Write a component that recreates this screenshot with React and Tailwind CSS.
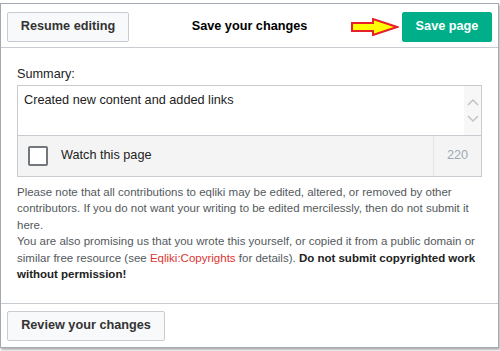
export default function App() {
  return (
    <div className="w-[500px] h-[351px] bg-white pt-[3px] font-['Liberation_Sans',Arial,sans-serif] text-[12.7px]">
      <div className="w-[499px] h-[345px] border border-[#a2a9b1] shadow-[1px_2px_2px_0_rgba(0,0,0,0.3)] flex flex-col bg-white">
        {/* Header */}
        <div className="h-[44px] border-b border-[#c8ccd1] grid grid-cols-[1fr_auto_1fr] items-start pt-[8px] px-[6px]">
          <div>
            <button className="w-[122px] h-[30px] border border-[#c8ccd1] bg-[#f8f9fa] rounded-[2px] font-bold text-[#333]">
              Resume editing
            </button>
          </div>
          <h2 className="font-bold text-black h-[30px] flex items-center">Save your changes</h2>
          <div className="flex justify-end items-center gap-[3px]">
            <svg width="48" height="18" viewBox="0 0 48 18">
              <polygon
                points="1,5 22,5 22,1 46,9 22,17 22,13 1,13"
                fill="#ffff00"
                stroke="#e8202a"
                strokeWidth="2"
              />
            </svg>
            <button className="w-[90px] h-[30px] border border-[#00af89] bg-[#00af89] rounded-[2px] font-bold text-white">
              Save page
            </button>
          </div>
        </div>

        {/* Body */}
        <div className="h-[256px] px-[16px] pt-[18px] border-b border-[#c8ccd1]">
          <label className="block leading-[16px] text-[#222]">Summary:</label>
          <div className="mt-[3px] border border-[#c8ccd1]">
            <div className="h-[49px] flex">
              <div className="flex-1 px-[6px] pt-[5px] text-[#222]">Created new content and added links</div>
              <div className="w-[17px] bg-[#f7f7f7] flex flex-col items-center justify-center gap-[9px]">
                <svg width="12" height="8" viewBox="0 0 12 8">
                  <path d="M1 7 L6 2 L11 7" fill="none" stroke="#c0c4c8" strokeWidth="1.5" />
                </svg>
                <svg width="12" height="8" viewBox="0 0 12 8">
                  <path d="M1 1 L6 6 L11 1" fill="none" stroke="#c0c4c8" strokeWidth="1.5" />
                </svg>
              </div>
            </div>
            <div className="h-[41px] border-t border-[#c8ccd1] bg-[#f4f4f4] flex items-center">
              <div className="flex-1 flex items-center pl-[10px]">
                <span className="w-[20px] h-[20px] border-2 border-[#72777d] rounded-[2px] bg-white"></span>
                <span className="ml-[13px] text-[#222]">Watch this page</span>
              </div>
              <div className="w-[48px] h-full border-l border-[#e4e4e4] flex items-center justify-center text-[#a2a9b1]">
                220
              </div>
            </div>
          </div>
          <div className="mt-[7px] leading-[16.4px] text-[11.5px] text-[#54595d] whitespace-nowrap">
            <p>
              Please note that all contributions to eqliki may be edited, altered, or removed by other
              <br />
              contributors. If you do not want your writing to be edited mercilessly, then do not submit it
              <br />
              here.
            </p>
            <p>
              You are also promising us that you wrote this yourself, or copied it from a public domain or
              <br />
              similar free resource (see <a className="text-[#d33]">Eqliki:Copyrights</a> for details).{" "}
              <b className="text-[#222]">Do not submit copyrighted work</b>
              <br />
              <b className="text-[#222]">without permission!</b>
            </p>
          </div>
        </div>

        {/* Footer */}
        <div className="flex-1 px-[6px] pt-[7px]">
          <button className="w-[158px] h-[30px] border border-[#c8ccd1] bg-[#f8f9fa] rounded-[2px] font-bold text-[#333]">
            Review your changes
          </button>
        </div>
      </div>
    </div>
  );
}
